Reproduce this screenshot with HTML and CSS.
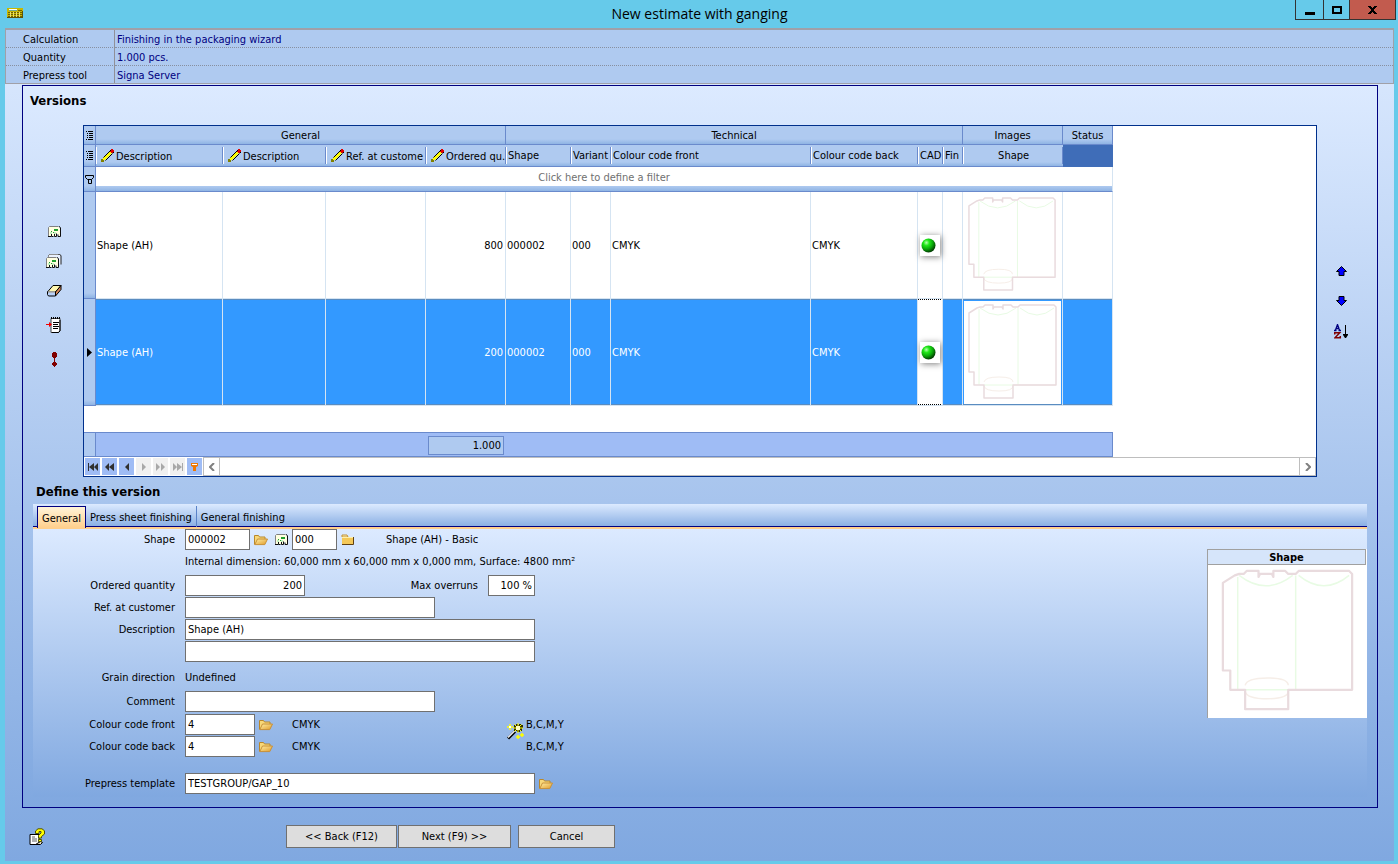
FILE: index.html
```html
<!DOCTYPE html>
<html lang="en">

<head>
    <meta charset="UTF-8">
    <meta name="viewport" content="width=device-width, initial-scale=1.0">
    <title>New estimate with ganging</title>
    <link rel="stylesheet" href="styles.css">
</head>

<body>
    <!-- shared icons -->
    <svg class="sprite" width="0" height="0" aria-hidden="true">
        <defs>
            <linearGradient id="gold" x1="0" y1="0" x2="1" y2="1">
                <stop offset="0" stop-color="#fff0a8"/>
                <stop offset="1" stop-color="#e09a28"/>
            </linearGradient>
            <radialGradient id="green" cx="0.35" cy="0.3" r="0.7">
                <stop offset="0" stop-color="#b8ffb0"/>
                <stop offset="0.3" stop-color="#20e818"/>
                <stop offset="0.65" stop-color="#0aa80a"/>
                <stop offset="1" stop-color="#024002"/>
            </radialGradient>
        </defs>
        <symbol id="i-pencil" viewBox="0 0 13 13">
            <path d="M1 12l1-3 7-7 2 2-7 7z" fill="#ffff00"/>
            <path d="M2.500 8.500l7-7M4.500 11.500l7-7" stroke="#000" stroke-width="1"/>
            <path d="M0 10h2v1h1v2H0z" fill="#808000"/>
            <path d="M9 1h1V0h2v1h1v2h-1v1h-2V3H9z" fill="#e00000"/>
            <path d="M9 1h1v1H9zM12 3h1v1h-1z" fill="#000"/>
        </symbol>
        <symbol id="i-folder-open" viewBox="0 0 14 12">
            <path d="M.5 10.500v-9h4l1 1.500h5.500v2" fill="#f8d878" stroke="#b8872c"/>
            <path d="M.8 10.600L3.500 5h10l-2.700 5.600z" fill="url(#gold)" stroke="#c89038"/>
        </symbol>
        <symbol id="i-folder" viewBox="0 0 14 12">
            <path d="M1 3V1h5l1 2z" fill="#fff0b0" stroke="#c09038" stroke-width="1"/>
            <path d="M1 3h11v7H1z" fill="#f4c858"/>
            <path d="M1 3h11v1H1z" fill="#fff0a8"/>
            <path d="M1 10.500h11.500V3" fill="none" stroke="#604010"/>
        </symbol>
        <symbol id="i-shape" viewBox="0 0 13 11">
            <path d="M1 1h10l1 2v7h-2V8H9v2H7V7H6v3H4V8H3v2H1z" fill="#ffffe0"/>
            <path d="M.5 10v-8.500l1-1h9" fill="none" stroke="#808080"/>
            <path d="M11 .5h.5l1 1.500v8.500h-2.500v-2M8.500 10.500H6.500V7.500M5.500 10.500H3.500V7.500M3 10.500H0M8.500 7.500v3" fill="none" stroke="#101010"/>
            <path d="M6 3h2v2H6zM8 3h2v2H8zM3 5h1v1H3zM5 6h1v1H5z" fill="#20a030"/>
            <path d="M2 6h2v2H2zM6 6h2v2H6z" fill="#c0f0c0"/>
        </symbol>
        <symbol id="i-rows" viewBox="0 0 7 9">
            <path d="M0 0h1v1H0zM2 0h5v1H2zM1 2h1v1H1zM3 2h4v1H3zM1 4h1v1H1zM3 4h4v1H3zM1 6h1v1H1zM3 6h4v1H3zM0 8h1v1H0zM2 8h5v1H2z" fill="#000"/>
        </symbol>
        <symbol id="i-ball" viewBox="0 0 15 15">
            <circle cx="7.500" cy="7.500" r="7" fill="url(#green)"/>
        </symbol>
        <symbol id="i-box" viewBox="0 0 100 107">
            <g fill="none" stroke="#e8fbe4" stroke-width="1">
                <path d="M16 10v76M55 9v77M17 9Q35 23 53 9M57 9Q74 23 91 9M21 86h29"/>
            </g>
            <g fill="none" stroke="#f6eee8" stroke-width="1">
                <path d="M21 83q1-5 15-5t14 5M21 87q1 5 15 5t14-5M50 86h43"/>
            </g>
            <path d="M6 14l8-5 3-1h3l2-2h8v4l1-2h8l1 2V6h8l2 2h5l2-2h34l2 2v78H50v13H21V86H11V73H6z" fill="none" stroke="#e9dbde" stroke-width="1.500" stroke-linejoin="round"/>
        </symbol>
    </svg>

    <header class="titlebar">
        <svg class="app-icon" width="16" height="10" viewBox="0 0 16 10" shape-rendering="crispEdges">
            <path d="M0 0h16v10H0z" fill="#c8b800"/>
            <path d="M2 1h8v1H2z" fill="#fff"/>
            <path d="M2 2h8v1H2z" fill="#70a890"/>
            <path d="M1 4h14v1H1zM1 6h14v1H1zM1 8h14v1H1zM11 2h4v1h-4z" fill="#706000"/>
            <path d="M3 4h1v5H3zM6 4h1v5H6zM9 4h1v5H9zM12 4h1v5h-1z" fill="#e8e070"/>
            <path d="M0 9h16v1H0zM15 3h1v7h-1z" fill="#605400"/>
        </svg>
        <h1>New estimate with ganging</h1>
        <div class="window-buttons">
            <button type="button" aria-label="Minimize"><svg width="10" height="10"><path d="M0 7h10v3H0z"/></svg></button>
            <button type="button" class="maximize" aria-label="Maximize"><svg width="10" height="10"><path d="M1 2h8v6H1z" fill="none" stroke="#000" stroke-width="2"/></svg></button>
            <button type="button" class="close" aria-label="Close"><svg width="9" height="8"><path d="M0 0h3v1h1v1h1V1h1V0h3v1H8v1H7v1H6v2h1v1h1v1h1v1H6V7H5V6H4v1H3v1H0V7h1V6h1V5h1V3H2V2H1V1H0z"/></svg></button>
        </div>
    </header>

    <main class="window">
        <table class="info">
            <tr><th scope="row">Calculation</th><td>Finishing in the packaging wizard</td></tr>
            <tr><th scope="row">Quantity</th><td>1.000 pcs.</td></tr>
            <tr><th scope="row">Prepress tool</th><td>Signa Server</td></tr>
        </table>

        <section class="panel">
            <h2>Versions</h2>
            <div class="versions">
                <div class="tools tools-left">
                    <button type="button" aria-label="Add shape"><svg width="13" height="11"><use href="#i-shape"/></svg></button>
                    <button type="button" aria-label="Add several shapes">
                        <svg width="16" height="14" viewBox="0 0 16 14">
                            <path d="M2.500 3V1.500l1-1h10l1.500 1v9" fill="#e8f0ff" stroke="#202020"/>
                            <path d="M2.500 3V1.500l1-1h9" fill="none" stroke="#909090"/>
                            <svg y="3" width="13" height="11"><use href="#i-shape"/></svg>
                        </svg>
                    </button>
                    <button type="button" aria-label="Delete">
                        <svg width="15" height="12" viewBox="0 0 15 12">
                            <path d="M6 .5h8L8.500 7h-8z" fill="#fff8b0" stroke="#000"/>
                            <path d="M.5 7h8v4h-7l-1-1.500z" fill="#b8d0f8" stroke="#000"/>
                            <path d="M1 7h7" stroke="#fff"/>
                            <path d="M8.500 7L14 .5v4L8.500 11z" fill="#d88858" stroke="#000"/>
                        </svg>
                    </button>
                    <button type="button" class="spaced" aria-label="Insert list">
                        <svg width="16" height="16" viewBox="0 0 16 16">
                            <path d="M5 1.500h9v12l-1.500 2H5z" fill="#fff" stroke="#404040"/>
                            <path d="M14 3v11l-1.500 1.500H6" fill="none" stroke="#000"/>
                            <path d="M5 0h1v2H5zM7 0h1v2H7zM9 0h1v2H9zM11 0h1v2h-1zM13 0h1v2h-1zM7 5h6v1H7zM7 7h5v1H7zM7 9h6v1H7zM7 11h5v1H7z"/>
                            <path d="M0 7h3V5l3 2.500L3 10V8H0z" fill="#f00000"/>
                        </svg>
                    </button>
                    <button type="button" class="spaced" aria-label="Priority">
                        <svg width="7" height="15" viewBox="0 0 7 15"><path d="M2 0h3v1h1v4H5v1H4v4h1v1h1v2H5v1H4v1H3v-1H2v-1H1v-2h1v-1h1V6H2V5H1V1h1z" fill="#800000"/></svg>
                    </button>
                </div>

                <div class="grid">
                    <table class="data">
                        <colgroup>
                            <col class="w-mark"><col class="w-desc"><col class="w-desc2"><col class="w-img"><col class="w-qty"><col class="w-shape"><col class="w-variant">
                            <col class="w-front"><col class="w-back"><col class="w-cad"><col class="w-fin"><col class="w-img"><col class="w-status">
                        </colgroup>
                        <thead>
                            <tr class="groups">
                                <td class="mark"><svg width="7" height="9"><use href="#i-rows"/></svg></td>
                                <th colspan="4">General</th>
                                <th colspan="6">Technical</th>
                                <th>Images</th>
                                <th>Status</th>
                            </tr>
                            <tr class="columns">
                                <td class="mark"><svg width="7" height="9"><use href="#i-rows"/></svg></td>
                                <th class="editable"><svg width="13" height="13"><use href="#i-pencil"/></svg>Description</th>
                                <th class="editable"><svg width="13" height="13"><use href="#i-pencil"/></svg>Description</th>
                                <th class="editable"><svg width="13" height="13"><use href="#i-pencil"/></svg>Ref. at custome</th>
                                <th class="editable"><svg width="13" height="13"><use href="#i-pencil"/></svg>Ordered qu.</th>
                                <th>Shape</th>
                                <th>Variant</th>
                                <th>Colour code front</th>
                                <th>Colour code back</th>
                                <th>CAD</th>
                                <th>Fin</th>
                                <th class="center">Shape</th>
                                <td class="no-column"></td>
                            </tr>
                            <tr class="filter">
                                <td class="mark"><svg width="9" height="9"><path d="M.5.500h8v2l-2 2h-4l-2-2zM3.500 4.500v4h3v-4" fill="none" stroke="#000"/></svg></td>
                                <td colspan="12">Click here to define a filter</td>
                            </tr>
                        </thead>
                        <tbody>
                            <tr>
                                <td class="mark"></td>
                                <td>Shape (AH)</td>
                                <td></td>
                                <td></td>
                                <td class="num">800</td>
                                <td>000002</td>
                                <td>000</td>
                                <td>CMYK</td>
                                <td>CMYK</td>
                                <td class="cad"><span class="light"><svg width="15" height="15"><use href="#i-ball"/></svg></span></td>
                                <td></td>
                                <td class="image"><svg width="99" height="106"><use href="#i-box"/></svg></td>
                                <td></td>
                            </tr>
                            <tr class="selected">
                                <td class="mark"><svg width="5" height="9"><path d="M0 0l5 4.500L0 9z"/></svg></td>
                                <td>Shape (AH)</td>
                                <td></td>
                                <td></td>
                                <td class="num">200</td>
                                <td>000002</td>
                                <td>000</td>
                                <td>CMYK</td>
                                <td>CMYK</td>
                                <td class="cad"><span class="light"><svg width="15" height="15"><use href="#i-ball"/></svg></span></td>
                                <td></td>
                                <td class="image"><svg width="97" height="103" viewBox="1 2 97 103"><use href="#i-box" width="100" height="107"/></svg></td>
                                <td></td>
                            </tr>
                        </tbody>
                        <tfoot>
                            <tr class="blank"><td colspan="13"></td></tr>
                            <tr class="sums">
                                <td class="mark"></td>
                                <td colspan="3"></td>
                                <td><span class="sum">1.000</span></td>
                                <td colspan="8"></td>
                            </tr>
                        </tfoot>
                    </table>
                    <div class="navigator">
                        <button type="button" aria-label="First"><svg width="10" height="8"><path d="M0 0h1v8H0zM6 0v8L1 4zM10 0v8L6 4z"/></svg></button>
                        <button type="button" aria-label="Previous page"><svg width="9" height="8"><path d="M4 0v8L0 4zM9 0v8L4 4z"/></svg></button>
                        <button type="button" aria-label="Previous"><svg width="4" height="8"><path d="M4 0v8L0 4z"/></svg></button>
                        <button type="button" disabled aria-label="Next"><svg width="4" height="8"><path d="M0 0v8l4-4z"/></svg></button>
                        <button type="button" disabled aria-label="Next page"><svg width="9" height="8"><path d="M0 0v8l4-4zM5 0v8l4-4z"/></svg></button>
                        <button type="button" disabled aria-label="Last"><svg width="10" height="8"><path d="M9 0h1v8H9zM0 0v8l4-4zM4 0v8l5-4z"/></svg></button>
                        <button type="button" class="filter-button" aria-label="Filter"><svg width="7" height="8"><path d="M0 0h7v3L5 4v4H2V4L0 3z"/><path d="M1 1h5v1H1z" fill="#fff"/></svg></button>
                        <div class="scrollbar">
                            <button type="button" aria-label="Scroll left"><svg width="6" height="8"><path d="M5 0L1 4l4 4"/></svg></button>
                            <button type="button" aria-label="Scroll right"><svg width="6" height="8"><path d="M1 0l4 4-4 4"/></svg></button>
                        </div>
                    </div>
                </div>

                <div class="tools tools-right">
                    <button type="button" aria-label="Move up"><svg width="11" height="10" viewBox="0 0 11 10"><path d="M5.500.500l5 5h-2.500v4H3v-4H.5z" fill="#0000ff" stroke="#000"/></svg></button>
                    <button type="button" aria-label="Move down"><svg width="11" height="10" viewBox="0 0 11 10"><path d="M5.500 9.500l5-5h-2.500v-4H3v4H.5z" fill="#0000ff" stroke="#000"/></svg></button>
                    <button type="button" aria-label="Sort">
                        <svg width="15" height="15" viewBox="0 0 15 15" fill="none">
                            <path d="M0 6.500h2.500M4.500 6.500H7M1.500 6l2-5.500L5.500 6M2 4.500h3.500" stroke="#000080" stroke-width="1.300"/>
                            <path d="M.7 10.500V8.700h5L1 13.800h5.300V12" stroke="#800000" stroke-width="1.500"/>
                            <path d="M11.500 1v10" stroke="#000"/>
                            <path d="M9 10h5v1l-2 3h-1l-2-3z" fill="#000"/>
                        </svg>
                    </button>
                </div>
            </div>

            <h2 class="define">Define this version</h2>
            <div class="version">
                <nav class="tabs">
                    <button type="button" class="active">General</button>
                    <button type="button">Press sheet finishing</button>
                    <button type="button">General finishing</button>
                </nav>
                <div class="tab-page">
                    <form id="version-form">
                        <div class="row">
                            <label for="shape">Shape</label>
                            <input id="shape" class="in-shape" type="text" value="000002">
                            <button type="button" class="pick" aria-label="Choose shape"><svg width="14" height="12"><use href="#i-folder-open"/></svg></button>
                            <button type="button" class="pick" aria-label="Show shape"><svg width="13" height="11"><use href="#i-shape"/></svg></button>
                            <input class="in-variant" type="text" value="000" aria-label="Variant">
                            <button type="button" class="pick" aria-label="Choose variant"><svg width="14" height="12"><use href="#i-folder"/></svg></button>
                            <span class="shape-name">Shape (AH) - Basic</span>
                        </div>
                        <div class="row indent">
                            <span>Internal dimension: 60,000 mm x 60,000 mm x 0,000 mm, Surface: 4800 mm²</span>
                        </div>
                        <div class="row gap-s">
                            <label for="quantity">Ordered quantity</label>
                            <input id="quantity" class="in-qty" type="text" value="200">
                            <label for="overruns" class="overruns">Max overruns</label>
                            <input id="overruns" class="in-overruns" type="text" value="100 %">
                        </div>
                        <div class="row">
                            <label for="ref">Ref. at customer</label>
                            <input id="ref" class="in-medium" type="text">
                        </div>
                        <div class="row">
                            <label for="description">Description</label>
                            <input id="description" class="in-long" type="text" value="Shape (AH)">
                        </div>
                        <div class="row indent">
                            <input class="in-long" type="text" aria-label="Description, second line">
                        </div>
                        <div class="row gap-m">
                            <span class="caption">Grain direction</span>
                            <span>Undefined</span>
                        </div>
                        <div class="row gap-s">
                            <label for="comment">Comment</label>
                            <input id="comment" class="in-medium" type="text">
                        </div>
                        <div class="colours">
                            <div>
                                <div class="row">
                                    <label for="front">Colour code front</label>
                                    <input id="front" class="in-code" type="text" value="4">
                                    <button type="button" class="pick" aria-label="Choose front colours"><svg width="14" height="12"><use href="#i-folder-open"/></svg></button>
                                    <span class="colour-name">CMYK</span>
                                </div>
                                <div class="row">
                                    <label for="back">Colour code back</label>
                                    <input id="back" class="in-code" type="text" value="4">
                                    <button type="button" class="pick" aria-label="Choose back colours"><svg width="14" height="12"><use href="#i-folder-open"/></svg></button>
                                    <span class="colour-name">CMYK</span>
                                </div>
                            </div>
                            <button type="button" class="wand" aria-label="Colour wizard">
                                <svg width="17" height="17" viewBox="0 0 17 17">
                                    <path d="M1 15.500l7-7" stroke="#000" stroke-width="3"/>
                                    <path d="M1 14.500l7-7" stroke="#f0f0f0" stroke-width="1.500"/>
                                    <path d="M7 2h2V1h2v1h1V1h2v1h2v3h-1v3h-2v1h-3V8H7z" fill="#303000"/>
                                    <path d="M11 0v10M6 5h10M7.500 1.500l7 7M14.500 1.500l-7 7" stroke="#ffff00" stroke-width="1"/>
                                    <path d="M9 3h4v4H9z" fill="#ffffc0"/>
                                    <path d="M3 1v6M0 4h6M11 12v4M9 14h4M15 10v4M13 12h4" stroke="#ffff00" stroke-width="1.500"/>
                                    <path d="M2 3h2v2H2z" fill="#fff"/>
                                </svg>
                            </button>
                            <div>
                                <div class="row">B,C,M,Y</div>
                                <div class="row">B,C,M,Y</div>
                            </div>
                        </div>
                        <div class="row gap-l">
                            <label for="template">Prepress template</label>
                            <input id="template" class="in-long" type="text" value="TESTGROUP/GAP_10">
                            <button type="button" class="pick" aria-label="Choose template"><svg width="14" height="12"><use href="#i-folder-open"/></svg></button>
                        </div>
                    </form>
                    <aside class="preview">
                        <h3>Shape</h3>
                        <svg viewBox="-4 2 107 103"><use href="#i-box" width="100" height="107"/></svg>
                    </aside>
                </div>
            </div>
        </section>

        <footer class="actions">
            <button type="button" class="help" aria-label="Help">
                <svg width="17" height="18" viewBox="0 0 17 18">
                    <path d="M1 6.500h9v10H1z" fill="#fff" stroke="#000"/>
                    <path d="M3 9h3M3 11h5M3 13h5" stroke="#606060"/>
                    <path d="M6.500 16.500l5-3 2 1-2 2z" fill="#e8e0c0" stroke="#000"/>
                    <path d="M6.500 5.500V3L9 .8h4l2.500 2V6l-3 2.500V10h-3V7.500L12 5V3.500h-2v2z" fill="#ffff00" stroke="#505000"/>
                    <path d="M9.500 11.500h3v2h-3z" fill="#ffff00" stroke="#505000"/>
                </svg>
            </button>
            <button type="button" class="action back">&lt;&lt; Back (F12)</button>
            <button type="button" class="action next">Next (F9) &gt;&gt;</button>
            <button type="button" class="action cancel">Cancel</button>
        </footer>
    </main>
</body>

</html>
```

FILE: styles.css
```css
* {
    box-sizing: border-box;
}

body {
    display: flex;
    flex-direction: column;
    min-height: 100vh;
    margin: 0;
    padding: 0 4px 3px 5px;
    background-color: #66caea;
    font-family: Tahoma, "DejaVu Sans Condensed", "DejaVu Sans", sans-serif;
    font-size: 11px;
    line-height: 14px;
    color: #000;
}

button,
input {
    margin: 0;
    padding: 0;
    border: 0;
    border-radius: 0;
    background: none;
    font: inherit;
    color: inherit;
}

svg {
    display: block;
    flex: none;
}

.sprite {
    position: absolute;
}

/* title bar */
.titlebar {
    display: grid;
    grid-template-columns: 1fr auto 1fr;
    height: 28px;
}

.titlebar h1 {
    margin: 0;
    font-family: "Segoe UI", "Open Sans", sans-serif;
    font-size: 14px;
    font-weight: 400;
    line-height: 28px;
}

.app-icon {
    margin: 8px 0 0 2px;
}

.window-buttons {
    display: flex;
    justify-self: end;
    height: 20px;
    margin-right: -2px;
}

.window-buttons button {
    display: flex;
    align-items: center;
    justify-content: center;
    width: 28px;
    border: solid #333;
    border-width: 0 0 1px 1px;
}

.window-buttons .maximize {
    width: 26px;
}

.window-buttons .close {
    width: 47px;
    border-right-width: 1px;
    background-color: #c25b4e;
}

.window {
    display: flex;
    flex-direction: column;
    flex: 1;
    background-image: linear-gradient(#dceaff, #80a8e0);
}

/* calculation data */
.info {
    width: 100%;
    border: 1px solid #a0a0a8;
    border-top-width: 2px;
    border-spacing: 0;
    background-color: #afcaf0;
}

.info th,
.info td {
    height: 18px;
    padding: 2px 2px 0;
    border-bottom: 1px dotted #8890a0;
    color: #000080;
}

.info th {
    width: 109px;
    padding-left: 17px;
    border-right: 1px solid #909098;
    color: #000;
    font-weight: 400;
    text-align: left;
}

.info tr:last-child > * {
    height: 17px;
    border-bottom: 0;
}

.panel {
    margin: 1px 16px 0 17px;
    border: 1px solid #000080;
    background-image: linear-gradient(#dceaff, #80a8e0);
}

h2 {
    height: 39px;
    margin: 0;
    padding: 7px 7px 0;
    font-size: 13px;
    line-height: 16px;
}

h2.define {
    height: 27px;
    padding: 7px 13px 0;
}

/* versions */
.versions {
    display: flex;
}

.tools {
    display: flex;
    flex-direction: column;
    align-items: center;
    gap: 10px;
    flex: none;
    width: 60px;
}

.tools-left {
    padding-top: 96px;
    padding-right: 0;
    padding-left: 2px;
}

.tools-right {
    padding: 136px 12px 0 0;
}

.tools button {
    display: flex;
    align-items: center;
    justify-content: center;
    width: 20px;
    height: 20px;
}

.tools .spaced {
    margin-top: 4px;
}

.grid {
    flex: 1;
    min-width: 0;
    border: 1px solid #00308c;
    background-color: #fff;
}

.data {
    width: 1029px;
    border-spacing: 0;
    table-layout: fixed;
}

.w-mark { width: 12px; }
.w-desc { width: 127px; }
.w-desc2 { width: 103px; }
.w-img { width: 100px; }
.w-qty { width: 80px; }
.w-shape { width: 65px; }
.w-variant { width: 40px; }
.w-front { width: 200px; }
.w-back { width: 107px; }
.w-cad { width: 25px; }
.w-fin { width: 20px; }
.w-status { width: 50px; }

.data th,
.data td {
    height: 107px;
    padding: 1px 1px 0;
    overflow: hidden;
    border-right: 1px solid #d5e4f2;
    border-bottom: 1px solid #d5e4f2;
    font-weight: 400;
    text-align: left;
    white-space: nowrap;
}

.data th,
.data .mark {
    border-right-color: #6a8acc;
    border-bottom-color: #6a8acc;
    background: linear-gradient(#afcaf0 calc(100% - 5px), #8fb4e4);
}

.data .groups > * {
    height: 19px;
    padding-top: 2px;
    text-align: center;
}

.data .columns > * {
    height: 22px;
}

.data .columns th {
    padding: 1px 1px 0 2px;
    border-right: 0;
    background:
        linear-gradient(#6a8acc, #6a8acc) right 2px / 1px 17px no-repeat,
        linear-gradient(#fff, #fff) left 2px / 1px 17px no-repeat,
        linear-gradient(#afcaf0 calc(100% - 4px), #8fb4e4);
}

.data .columns .editable {
    padding-left: 5px;
}

.editable svg {
    display: inline-block;
    margin-right: 2px;
    vertical-align: -2px;
}

.data .columns .center {
    text-align: center;
}

.data .no-column {
    border-color: #3f6db8;
    background-color: #3f6db8;
}

.data .mark {
    padding: 0;
}

.mark svg {
    margin: 0 auto;
}

.data .filter > * {
    height: 25px;
    padding-bottom: 4px;
    border-bottom-color: #6a8acc;
    color: #707070;
    text-align: center;
}

.data .filter td:last-child {
    background: linear-gradient(#afcaf0, #8fb4e4) bottom / 100% 5px no-repeat;
}

.data .filter .mark {
    padding-bottom: 0;
}

.data .num {
    padding-right: 2px;
    text-align: right;
}

.data .cad {
    padding-top: 0;
    overflow: visible;
}

.light {
    display: flex;
    align-items: center;
    width: 20px;
    height: 21px;
    margin-left: 1px;
    padding-left: 1px;
    background-color: #fff;
    box-shadow: 1px 1px 6px rgba(0, 0, 0, 0.5);
}

.data .image {
    padding: 0;
}

/* focus frame along the selected row */
.selected td {
    background:
        linear-gradient(#5a8cc0, #5a8cc0) top / 100% 1px no-repeat,
        linear-gradient(#5a8cc0, #5a8cc0) bottom / 100% 1px no-repeat,
        #3399ff;
    color: #fff;
}

.selected td.cad {
    background:
        repeating-linear-gradient(90deg, #000 0 1px, #fff 1px 2px) top / 100% 1px no-repeat,
        repeating-linear-gradient(90deg, #000 0 1px, #fff 1px 2px) bottom / 100% 1px no-repeat,
        #fff;
}

.selected .image svg {
    margin: 0 auto;
    background-color: #fff;
}

.data .blank td {
    height: 26px;
    border: 0;
}

.data .sums td {
    height: 25px;
    border: solid #6a8acc;
    border-width: 1px 0;
    background: #9fbcf5;
}

.data .sums td:last-child {
    border-right-width: 1px;
}

.data .sums .mark {
    border-right-width: 1px;
    background: #afcaf0;
}

.sum {
    display: block;
    height: 19px;
    margin: 0 1px;
    padding: 2px;
    border: 1px solid #6a8acc;
    background-color: #afcaf0;
    text-align: right;
}

/* record navigator */
.navigator {
    display: flex;
    gap: 2px;
    height: 19px;
    padding-left: 1px;
}

.navigator button {
    display: flex;
    align-items: center;
    justify-content: center;
    width: 15px;
    height: 17px;
    margin-top: 1px;
    background-color: #9fbcf5;
    fill: #303030;
}

.navigator button:disabled {
    background-color: #f0f0f0;
    fill: #a8a8a8;
}

.navigator .filter-button {
    fill: #f07800;
}

.scrollbar {
    display: flex;
    flex: 1;
    justify-content: space-between;
    margin-left: -1px;
    border: 1px solid #bebebe;
}

.navigator .scrollbar button {
    width: 16px;
    margin: 0;
    border-right: 1px solid #bebebe;
    background-color: #fff;
    fill: none;
    stroke: #808080;
    stroke-width: 2px;
}

.navigator .scrollbar button:last-child {
    border-right: 0;
    border-left: 1px solid #bebebe;
}

/* version details */
.version {
    margin: 0 10px 10px;
}

.tabs {
    display: flex;
    height: 25px;
    padding: 2px 0 0 4px;
    background: linear-gradient(#ffcf8c, #ffcf8c) bottom / 100% 2px no-repeat,
        linear-gradient(#000080, #000080) 0 22px / 100% 1px no-repeat,
        linear-gradient(#dceaff, #80a8e0);
}

.tabs button {
    height: 21px;
    padding: 3px 4px 0;
    border-right: 1px solid #5a82c8;
}

.tabs button:last-child {
    border-right: 0;
}

.tabs .active {
    width: 49px;
    height: 22px;
    padding: 2px 0 0;
    border: 1px solid #000080;
    border-bottom: 0;
    background-image: linear-gradient(#fff4d8, #ffcf8c);
}

.tab-page {
    display: flex;
    justify-content: space-between;
    align-items: flex-start;
    background-image: linear-gradient(#dceaff, #80a8e0);
}

#version-form {
    display: flex;
    flex-direction: column;
    padding-bottom: 2px;
}

.row {
    display: flex;
    align-items: center;
    height: 21px;
    margin-bottom: 1px;
}

.row label,
.caption {
    width: 142px;
    margin-right: 10px;
    text-align: right;
}

.row .overruns {
    width: 173px;
}

.indent {
    padding-left: 152px;
}

.gap-s {
    margin-top: 2px;
}

.gap-m {
    margin-top: 4px;
}

.gap-l {
    margin-top: 15px;
}

input {
    height: 21px;
    padding: 0 2px;
    border: 1px solid #707070;
    background-color: #fff;
}

.in-shape { width: 65px; }
.in-variant { width: 45px; }
.in-code { width: 70px; }
.in-medium { width: 250px; }
.in-long { width: 350px; }

.in-qty {
    width: 120px;
    text-align: right;
}

.in-overruns {
    width: 47px;
    text-align: right;
}

.pick {
    display: flex;
    align-items: center;
    justify-content: center;
    width: 21px;
    height: 21px;
}

.shape-name {
    margin-left: 28px;
}

.colour-name {
    margin-left: 16px;
}

.colours {
    display: flex;
    margin-top: 1px;
}

.colours > div:first-child {
    width: 474px;
}

.wand {
    width: 19px;
    height: 34px;
}

.preview {
    width: 160px;
    margin-top: 20px;
    border-left: 1px solid #a0a0a0;
    background-color: #fff;
}

.preview h3 {
    height: 16px;
    margin: 0 1px 0 0;
    border: 1px solid #a0a0a0;
    border-left: 0;
    background-color: #d6e5fa;
    font-size: 11px;
    line-height: 15px;
    text-align: center;
}

/* wizard buttons */
.actions {
    display: flex;
    align-items: center;
    flex: 1;
    min-height: 53px;
    padding: 4px 0 0 24px;
}

.action {
    width: 113px;
    height: 23px;
    border: 1px solid #707070;
    background-color: #dddddd;
}

.action.back {
    width: 111px;
    margin: 0 1px 0 240px;
}

.action.cancel {
    width: 97px;
    margin-left: 7px;
}
```
